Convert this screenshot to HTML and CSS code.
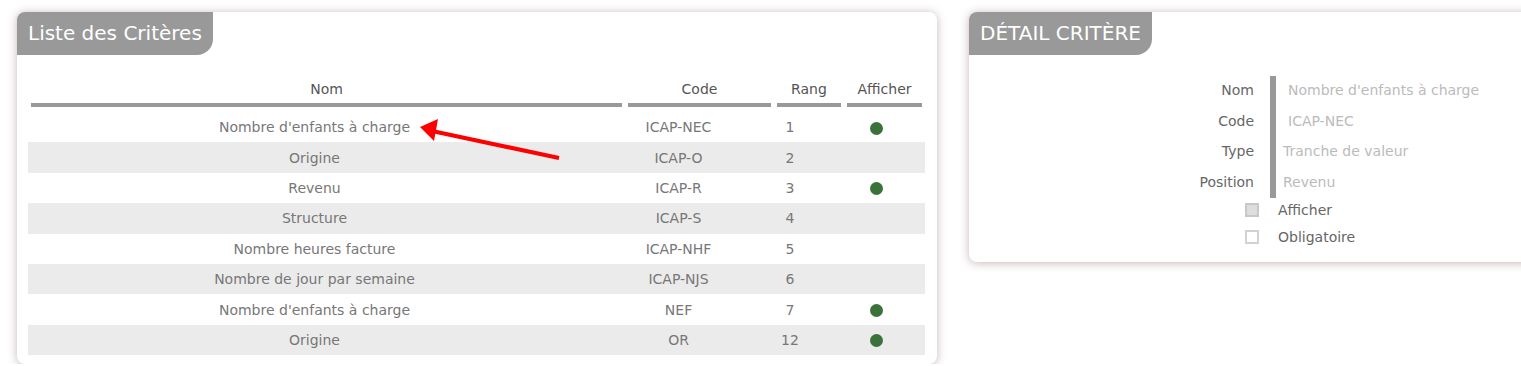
FILE: index.html
```html
<!DOCTYPE html>
<html lang="fr">
<head>
    <meta charset="UTF-8">
    <title>Critères</title>
    <link rel="stylesheet" href="styles.css">
</head>
<body>
    <div class="page">
        <div class="panel panel-list">
            <div class="panel-title">Liste des Critères</div>

            <table class="criteria">
                <thead>
                    <tr>
                        <th class="col-nom"><span>Nom</span></th>
                        <th class="col-code"><span>Code</span></th>
                        <th class="col-rang"><span>Rang</span></th>
                        <th class="col-aff"><span>Afficher</span></th>
                    </tr>
                </thead>
                <tbody>
                    <tr>
                        <td class="col-nom">Nombre d'enfants à charge</td>
                        <td class="col-code">ICAP-NEC</td>
                        <td class="col-rang">1</td>
                        <td class="col-aff"><span class="dot"></span></td>
                    </tr>
                    <tr>
                        <td class="col-nom">Origine</td>
                        <td class="col-code">ICAP-O</td>
                        <td class="col-rang">2</td>
                        <td class="col-aff"></td>
                    </tr>
                    <tr>
                        <td class="col-nom">Revenu</td>
                        <td class="col-code">ICAP-R</td>
                        <td class="col-rang">3</td>
                        <td class="col-aff"><span class="dot"></span></td>
                    </tr>
                    <tr>
                        <td class="col-nom">Structure</td>
                        <td class="col-code">ICAP-S</td>
                        <td class="col-rang">4</td>
                        <td class="col-aff"></td>
                    </tr>
                    <tr>
                        <td class="col-nom">Nombre heures facture</td>
                        <td class="col-code">ICAP-NHF</td>
                        <td class="col-rang">5</td>
                        <td class="col-aff"></td>
                    </tr>
                    <tr>
                        <td class="col-nom">Nombre de jour par semaine</td>
                        <td class="col-code">ICAP-NJS</td>
                        <td class="col-rang">6</td>
                        <td class="col-aff"></td>
                    </tr>
                    <tr>
                        <td class="col-nom">Nombre d'enfants à charge</td>
                        <td class="col-code">NEF</td>
                        <td class="col-rang">7</td>
                        <td class="col-aff"><span class="dot"></span></td>
                    </tr>
                    <tr>
                        <td class="col-nom">Origine</td>
                        <td class="col-code">OR</td>
                        <td class="col-rang">12</td>
                        <td class="col-aff"><span class="dot"></span></td>
                    </tr>
                </tbody>
            </table>

            <!-- annotation arrow -->
            <svg class="arrow" width="160" height="50" viewBox="0 0 160 50">
                <line x1="141" y1="43" x2="14" y2="16" stroke="#f00" stroke-width="4"/>
                <polygon points="2,12 20,4 16,26" fill="#f00"/>
            </svg>
        </div>

        <div class="panel panel-detail">
            <div class="panel-title">DÉTAIL CRITÈRE</div>

            <div class="fields">
                <div class="field">
                    <div class="field-label">Nom</div>
                    <div class="field-value input">Nombre d'enfants à charge</div>
                </div>
                <div class="field">
                    <div class="field-label">Code</div>
                    <div class="field-value input">ICAP-NEC</div>
                </div>
                <div class="field">
                    <div class="field-label">Type</div>
                    <div class="field-value">Tranche de valeur</div>
                </div>
                <div class="field">
                    <div class="field-label">Position</div>
                    <div class="field-value">Revenu</div>
                </div>
            </div>

            <div class="checks">
                <div class="check"><span class="box checked"></span>Afficher</div>
                <div class="check"><span class="box"></span>Obligatoire</div>
            </div>
        </div>
    </div>
</body>
</html>
```

FILE: styles.css
```css
body {
    margin: 0;
    font-family: "DejaVu Sans", "Lato", sans-serif;
    background-color: #fff;
    overflow: hidden;
}
.page {
    display: flex;
    align-items: flex-start;
    gap: 32px;
    padding: 12px 0 0 17px;
}
.panel {
    position: relative;
    background-color: #fff;
    border-radius: 8px;
    box-shadow: 0 1px 10px rgba(90, 50, 40, 0.35);
    flex-shrink: 0;
}
.panel-list {
    width: 920px;
    height: 352px;
}
.panel-detail {
    width: 600px;
    height: 250px;
}
.panel-title {
    display: inline-block;
    background-color: #999;
    color: #fff;
    font-size: 20px;
    line-height: 43px;
    padding: 0 11px;
    border-radius: 8px 0 16px 0;
}

/* list table */
.criteria {
    margin: 26px 0 0 11px;
    width: 897px;
    table-layout: fixed;
    border-collapse: collapse;
    font-size: 14px;
    color: #777;
}
.criteria th,
.criteria td {
    box-sizing: border-box;
}
.criteria th {
    font-weight: normal;
    color: #555;
    padding: 0 3px 5px;
}
.criteria th span {
    display: block;
    padding-bottom: 6px;
    border-bottom: 4px solid #999;
}
.criteria tbody tr {
    height: 30.4px;
}
.criteria tbody tr:nth-child(even) {
    background-color: #ebebeb;
}
.criteria td {
    text-align: center;
    padding: 0;
}
.col-nom { width: 597px; }
.col-code { width: 149px; }
.col-rang { width: 70px; }
.col-aff { width: 81px; }
.criteria td.col-nom { padding-right: 24px; }
.criteria td.col-code { padding-right: 42px; }
.criteria td.col-rang { padding-right: 38px; }
.criteria td.col-aff { padding-right: 16px; }
.dot {
    display: inline-block;
    width: 13px;
    height: 13px;
    border-radius: 50%;
    background-color: #3b7239;
    vertical-align: middle;
}
.arrow {
    position: absolute;
    left: 401px;
    top: 103px;
}

/* detail form */
.fields {
    margin-top: 21px;
    font-size: 14px;
}
.field {
    display: flex;
    height: 30.5px;
    align-items: stretch;
}
.field-label {
    width: 285px;
    text-align: right;
    color: #666;
    line-height: 28px;
}
.field-value {
    margin-left: 16px;
    border-left: 6px solid #999;
    padding-left: 7px;
    color: #bbb;
    line-height: 28px;
}
.field-value.input {
    padding-left: 12px;
}
.checks {
    margin-top: -2px;
    font-size: 14px;
    color: #666;
}
.check {
    display: flex;
    align-items: center;
    height: 27px;
    padding-left: 276px;
}
.box {
    width: 10px;
    height: 10px;
    border: 2px solid #d2d2d2;
    background-color: #fff;
    margin-right: 19px;
}
.box.checked {
    background-color: #ddd;
    border-color: #c8c8c8;
}
```
